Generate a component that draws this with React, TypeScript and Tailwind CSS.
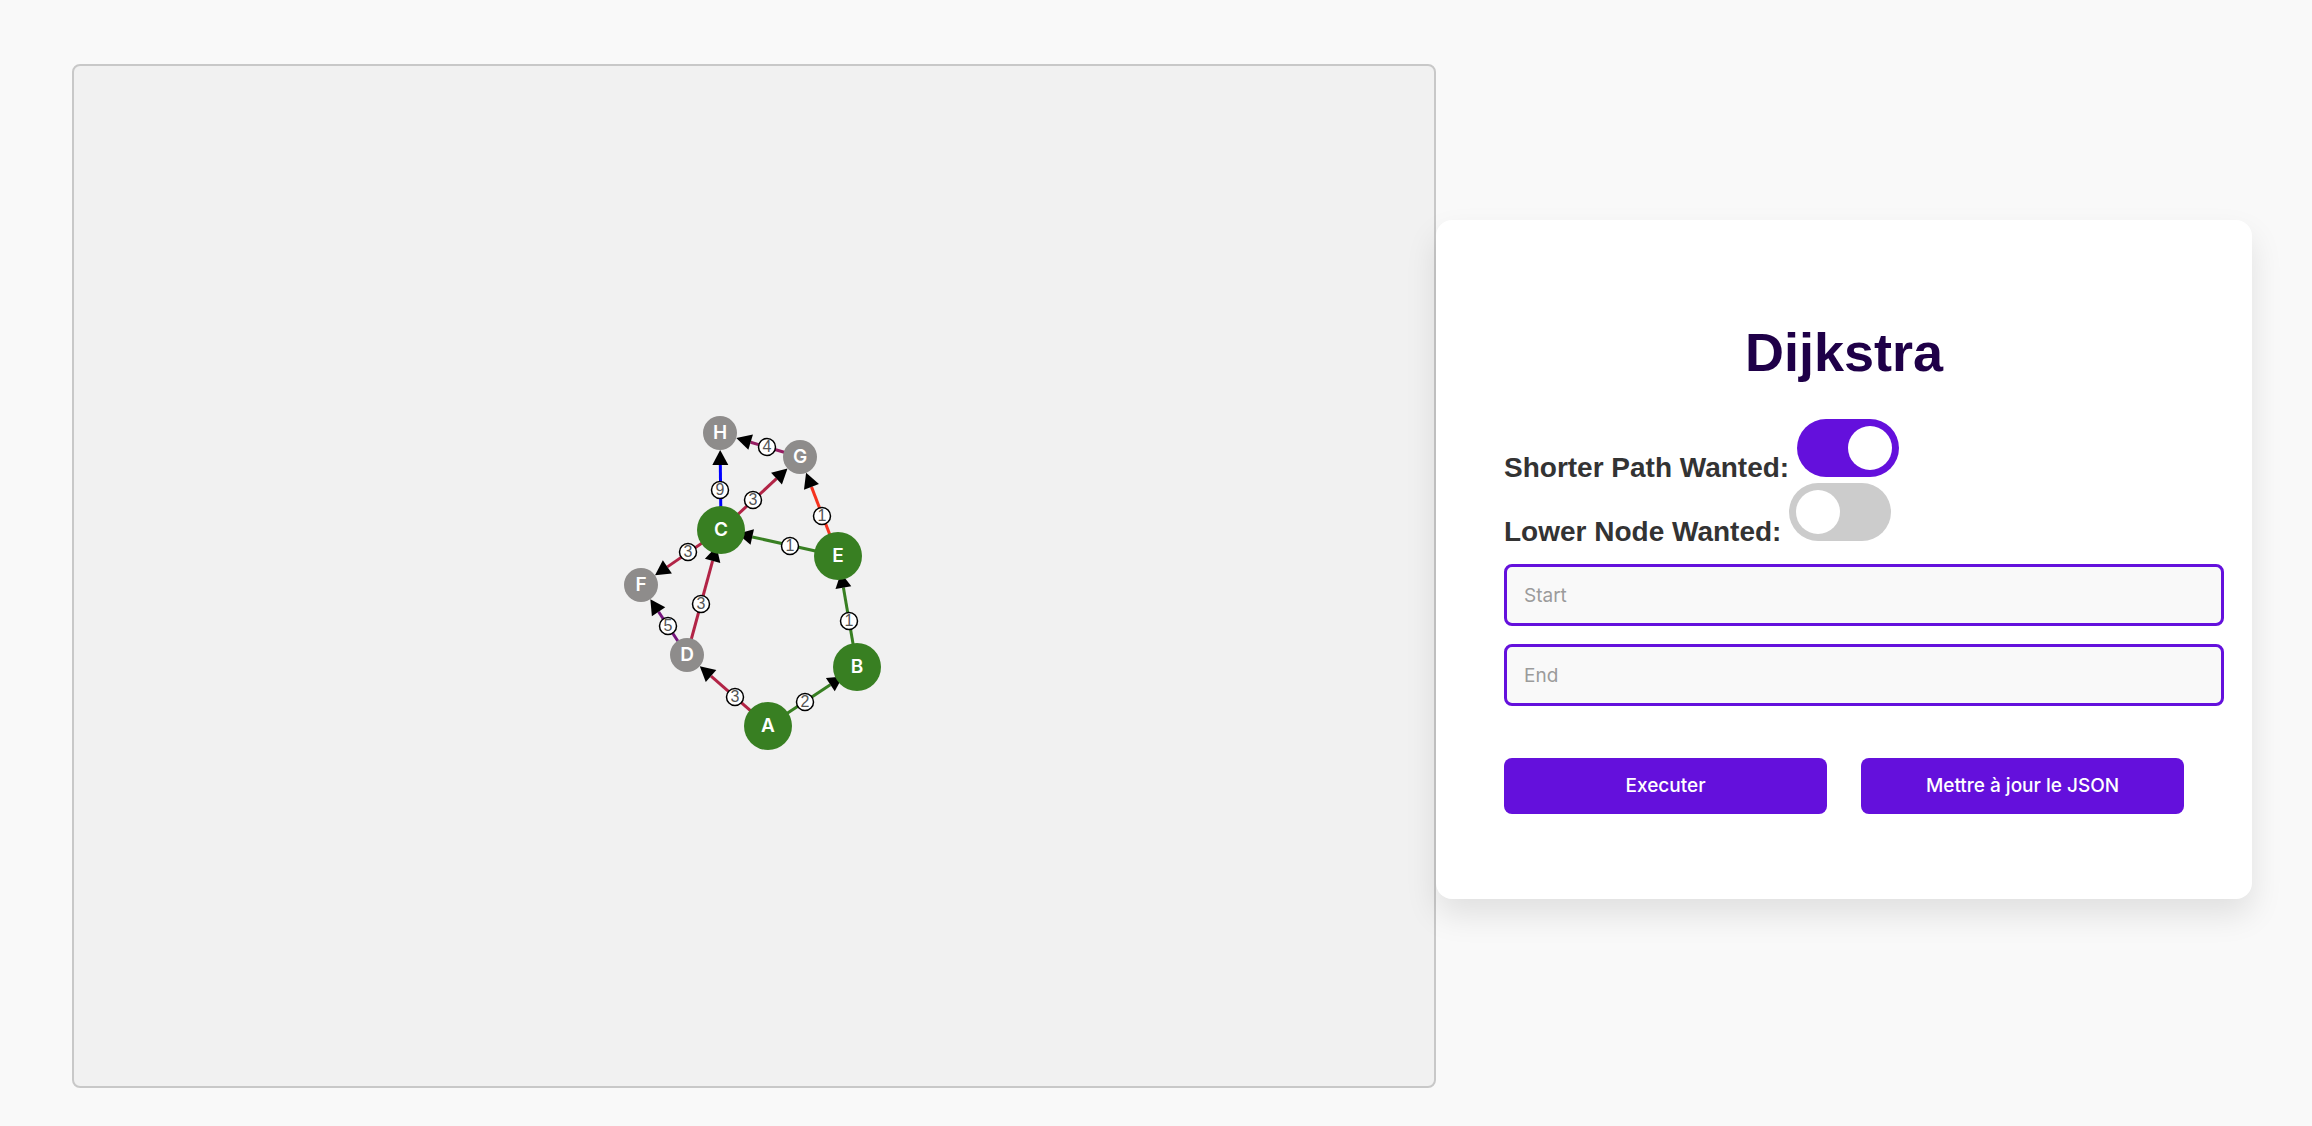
import { useState } from "react";

type GraphNode = { id: string; x: number; y: number; active?: boolean };
type GraphLink = { from: string; to: string; weight: number; color: string; x: number; y: number };

const nodes: GraphNode[] = [
  { id: "A", x: 768, y: 726, active: true },
  { id: "B", x: 857, y: 667, active: true },
  { id: "C", x: 721, y: 530, active: true },
  { id: "D", x: 687, y: 655 },
  { id: "E", x: 838, y: 556, active: true },
  { id: "F", x: 641, y: 585 },
  { id: "G", x: 800, y: 457 },
  { id: "H", x: 720, y: 433 },
];

const links: GraphLink[] = [
  { from: "A", to: "B", weight: 2, color: "#387f22", x: 805, y: 702 },
  { from: "A", to: "D", weight: 3, color: "#b22446", x: 735, y: 697 },
  { from: "B", to: "E", weight: 1, color: "#387f22", x: 849, y: 621 },
  { from: "D", to: "C", weight: 3, color: "#b22446", x: 701, y: 604 },
  { from: "D", to: "F", weight: 5, color: "#75147c", x: 668, y: 626 },
  { from: "C", to: "F", weight: 3, color: "#b22446", x: 688, y: 552 },
  { from: "C", to: "G", weight: 3, color: "#b22446", x: 753, y: 500 },
  { from: "C", to: "H", weight: 9, color: "#0000ff", x: 720, y: 490 },
  { from: "E", to: "C", weight: 1, color: "#387f22", x: 790, y: 546 },
  { from: "E", to: "G", weight: 1, color: "#f5331f", x: 822, y: 516 },
  { from: "G", to: "H", weight: 4, color: "#951d62", x: 767, y: 447 },
];

const find = (id: string) => nodes.find((n) => n.id === id)!;

function Arrow({ link }: { link: GraphLink }) {
  const a = find(link.from);
  const b = find(link.to);
  const length = Math.hypot(b.x - a.x, b.y - a.y);
  const ux = (b.x - a.x) / length;
  const uy = (b.y - a.y) / length;
  const tip = { x: b.x - ux * 17, y: b.y - uy * 17 };
  const base = { x: b.x - ux * 32, y: b.y - uy * 32 };
  const points = [
    `${tip.x},${tip.y}`,
    `${base.x - uy * 8},${base.y + ux * 8}`,
    `${base.x + uy * 8},${base.y - ux * 8}`,
  ].join(" ");
  return (
    <g>
      <line x1={a.x} y1={a.y} x2={base.x} y2={base.y} stroke={link.color} strokeWidth={3} />
      <polygon points={points} fill="#000" />
    </g>
  );
}

function Graph() {
  return (
    <svg viewBox="74 66 1360 1020" className="block aspect-[4/3] w-full" role="img" aria-label="Graph">
      {links.map((l) => (
        <Arrow key={l.from + l.to} link={l} />
      ))}
      {links.map((l) => (
        <g key={l.from + l.to}>
          <circle cx={l.x} cy={l.y} r={8.5} fill="#fff" stroke="#000" strokeWidth={1.5} />
          <text
            x={l.x}
            y={l.y + 5}
            textAnchor="middle"
            fill="#555"
            className="font-['Liberation_Sans',Arial,sans-serif] text-[16px]"
          >
            {l.weight}
          </text>
        </g>
      ))}
      {nodes.map((n) => (
        <g key={n.id}>
          <circle cx={n.x} cy={n.y} r={n.active ? 24 : 17} fill={n.active ? "#387f22" : "#8e8c8b"} />
          <text
            x={n.x}
            y={n.y + 6}
            textAnchor="middle"
            fill="#fff"
            className="font-[Inter,sans-serif] text-[19px] font-semibold"
          >
            {n.id}
          </text>
        </g>
      ))}
    </svg>
  );
}

function Toggle({ label, defaultOn }: { label: string; defaultOn: boolean }) {
  const [on, setOn] = useState(defaultOn);
  return (
    <label className="flex h-16 items-start gap-2">
      <span className="mt-[33px] text-[28px] leading-8 font-bold text-[#333]">{label}</span>
      <input
        type="checkbox"
        role="switch"
        checked={on}
        onChange={(e) => setOn(e.target.checked)}
        className="h-[58px] w-[102px] cursor-pointer appearance-none rounded-full bg-[#ccc] p-[7px] before:block before:size-[44px] before:rounded-full before:bg-white before:content-[''] checked:bg-[#6410dc] checked:before:ml-[44px]"
      />
    </label>
  );
}

const field =
  "-mr-10 h-[62px] rounded-lg border-[3px] border-[#6410dc] bg-[#f9f9f9] px-[17px] font-[Inter,sans-serif] text-[19px] text-[#333] placeholder:text-[#9b9b9b]";
const button =
  "h-14 cursor-pointer rounded-lg bg-[#6410dc] font-[Inter,sans-serif] text-[19px] font-medium text-white";

export default function App() {
  return (
    <main className="grid min-h-screen grid-cols-[minmax(0,1364fr)_minmax(0,816fr)] items-start bg-[#f9f9f9] pt-16 pr-[60px] pb-9 pl-[72px] font-['Liberation_Sans',Arial,sans-serif]">
      <section className="rounded-lg border-2 border-[#c8c8c8] bg-[#f1f1f1]">
        <Graph />
      </section>
      <form
        onSubmit={(e) => e.preventDefault()}
        className="relative mt-[156px] flex flex-col rounded-2xl bg-white px-[68px] pt-[100px] pb-[85px] shadow-[0_16px_32px_rgba(0,0,0,0.1)]"
      >
        <h1 className="mb-[35px] text-center text-[54px] leading-16 font-bold text-[#1f0048]">Dijkstra</h1>
        <Toggle label="Shorter Path Wanted:" defaultOn={true} />
        <Toggle label="Lower Node Wanted:" defaultOn={false} />
        <div className="mt-[17px] mb-[52px] flex flex-col gap-[18px]">
          <input type="text" aria-label="Start" placeholder="Start" className={field} />
          <input type="text" aria-label="End" placeholder="End" className={field} />
        </div>
        <div className="grid grid-cols-2 gap-[34px]">
          <button type="submit" className={button}>
            Executer
          </button>
          <button type="button" className={button}>
            Mettre à jour le JSON
          </button>
        </div>
      </form>
    </main>
  );
}
